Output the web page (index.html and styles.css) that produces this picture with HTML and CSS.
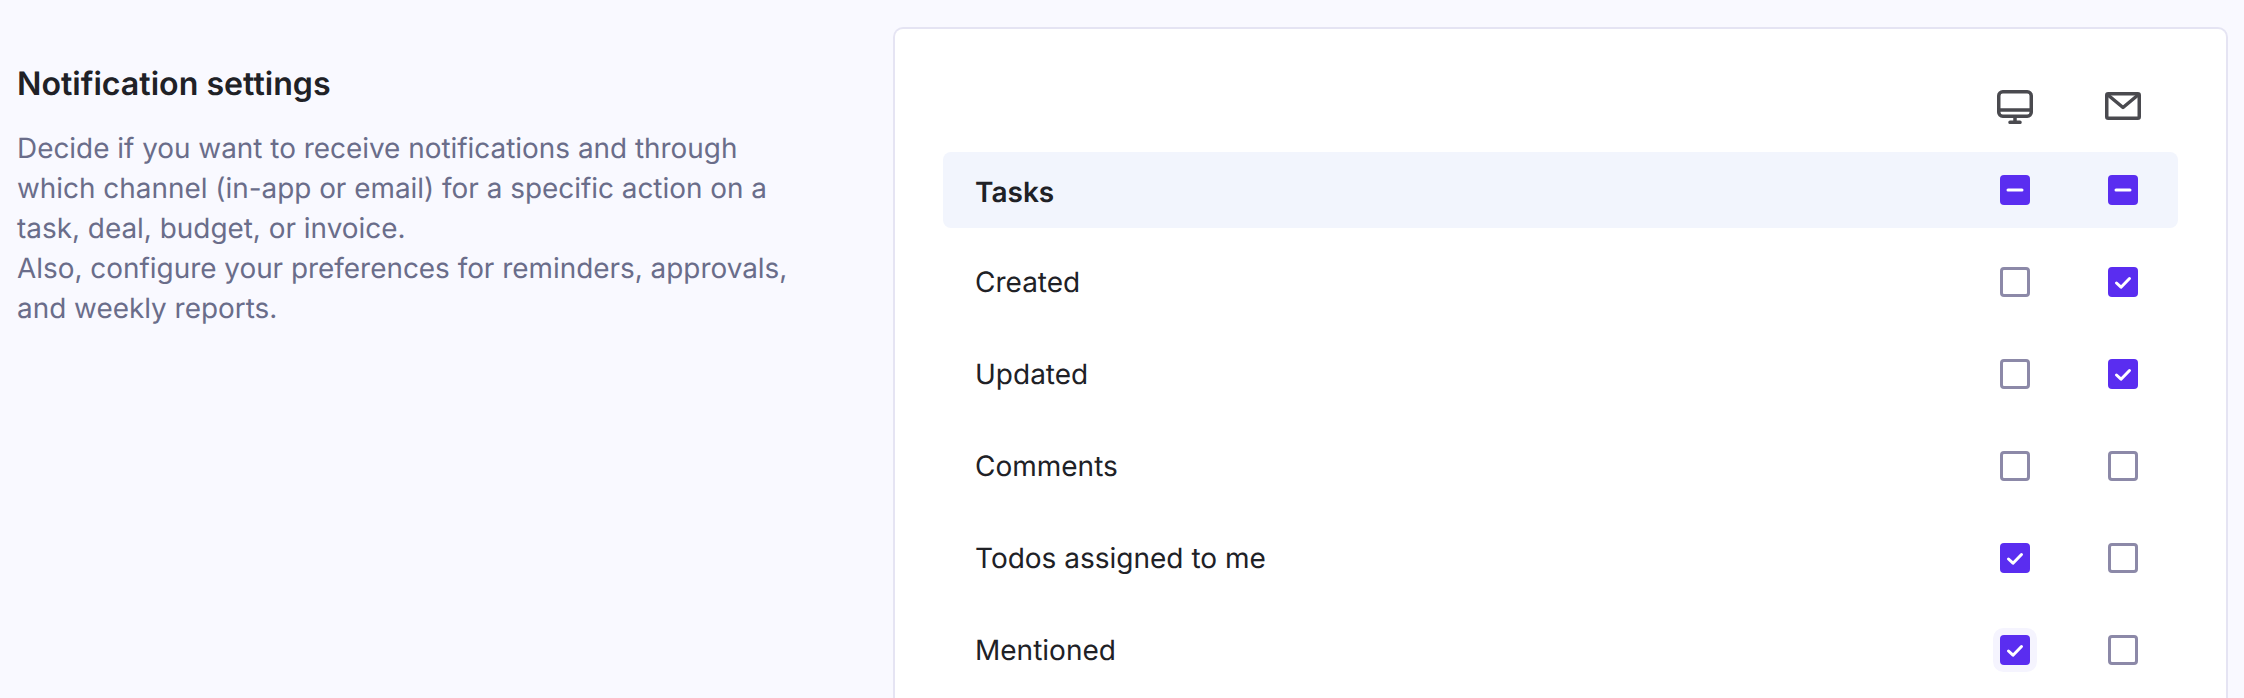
FILE: index.html
```html
<!DOCTYPE html>
<html lang="en">
<head>
<meta charset="utf-8">
<title>Notification settings</title>
<link rel="stylesheet" href="styles.css">
</head>
<body>
<main class="page">
  <section class="intro">
    <h2 class="intro-title">Notification settings</h2>
    <p class="intro-text">Decide if you want to receive notifications and through which channel (in-app or email) for a specific action on a task, deal, budget, or invoice.<br>Also, configure your preferences for reminders, approvals, and weekly reports.</p>
  </section>
  <section class="card">
    <div class="channels">
      <svg class="channel-icon" viewBox="0 0 36 34" width="36" height="34" fill="none" stroke="#4a4a4f" stroke-width="3.5" stroke-linejoin="round" stroke-linecap="round">
        <rect x="1.750" y="1.750" width="32.500" height="24.500" rx="4"></rect>
        <path d="M2 20h32M18 27v5M13 32.300h10"></path>
      </svg>
      <svg class="channel-icon" viewBox="0 0 36 34" width="36" height="34" fill="none" stroke="#4a4a4f" stroke-width="3.5" stroke-linejoin="round" stroke-linecap="round">
        <rect x="1.750" y="3.750" width="32.500" height="24.500" rx="1.500"></rect>
        <path d="M3 5l15 12.500L33 5"></path>
      </svg>
    </div>
    <div class="row row-head">
      <span class="label">Tasks</span>
      <span class="box on"><svg viewBox="0 0 30 30"><path class="mark" d="M8 15h14"></path></svg></span>
      <span class="box on"><svg viewBox="0 0 30 30"><path class="mark" d="M8 15h14"></path></svg></span>
    </div>
    <div class="row">
      <span class="label">Created</span>
      <span class="box"></span>
      <span class="box on"><svg viewBox="0 0 30 30"><path class="mark" d="M8.500 16l4.500 4.200 8.500-8.700"></path></svg></span>
    </div>
    <div class="row">
      <span class="label">Updated</span>
      <span class="box"></span>
      <span class="box on"><svg viewBox="0 0 30 30"><path class="mark" d="M8.500 16l4.500 4.200 8.500-8.700"></path></svg></span>
    </div>
    <div class="row">
      <span class="label">Comments</span>
      <span class="box"></span>
      <span class="box"></span>
    </div>
    <div class="row">
      <span class="label">Todos assigned to me</span>
      <span class="box on"><svg viewBox="0 0 30 30"><path class="mark" d="M8.500 16l4.500 4.200 8.500-8.700"></path></svg></span>
      <span class="box"></span>
    </div>
    <div class="row">
      <span class="label">Mentioned</span>
      <span class="box on focus"><svg viewBox="0 0 30 30"><path class="mark" d="M8.500 16l4.500 4.200 8.500-8.700"></path></svg></span>
      <span class="box"></span>
    </div>
  </section>
</main>
</body>
</html>
```
FILE: styles.css
```css
html, body {
  margin: 0;
  height: 698px;
  overflow: hidden;
  background: #f9f9ff;
}
body {
  font-family: Inter, "Liberation Sans", sans-serif;
  color: #202126;
  text-rendering: geometricPrecision;
}
.page {
  display: flex;
  align-items: flex-start;
  padding: 27px 16px 0 17px;
  height: 698px;
  box-sizing: border-box;
}
.intro {
  width: 876px;
  flex: none;
  padding-top: 37px;
}
.intro-title {
  margin: 0 0 24px;
  font-size: 32.15px;
  line-height: 40px;
  font-weight: 600;
}
.intro-text {
  margin: 0;
  width: 780px;
  font-size: 27.9px;
  line-height: 40px;
  color: #6a6d8a;
}
.card {
  flex: 1;
  min-width: 0;
  box-sizing: border-box;
  height: 671px;
  background: #fff;
  border: 2px solid #e5e4f3;
  border-bottom: 0;
  border-radius: 10px 10px 0 0;
  padding: 61px 48px 0;
  overflow: hidden;
}
.channels {
  display: flex;
  justify-content: flex-end;
  gap: 72px;
  padding-right: 37px;
  height: 62px;
}
.channel-icon {
  display: block;
  flex: none;
}
.row {
  display: flex;
  align-items: center;
  gap: 78px;
  height: 76px;
  padding: 0 40px 0 32px;
  margin-bottom: 16px;
  border-radius: 8px;
}
.row-head {
  background: #f2f5fd;
}
.row-head .label {
  font-weight: 600;
  padding-top: 4px;
}
.label {
  flex: 1;
  font-size: 28px;
  line-height: 40px;
}
.box {
  flex: none;
  box-sizing: border-box;
  width: 30px;
  height: 30px;
  border: 3px solid #8c89a8;
  border-radius: 4px;
  background: #fff;
}
.box.on {
  border: 0;
  background: #5a2df0;
}
.box.focus {
  box-shadow: 0 0 0 7px #f5f4fe;
}
.box svg {
  display: block;
  width: 30px;
  height: 30px;
}
.mark {
  fill: none;
  stroke: #fff;
  stroke-width: 3;
  stroke-linecap: round;
  stroke-linejoin: round;
}
```
